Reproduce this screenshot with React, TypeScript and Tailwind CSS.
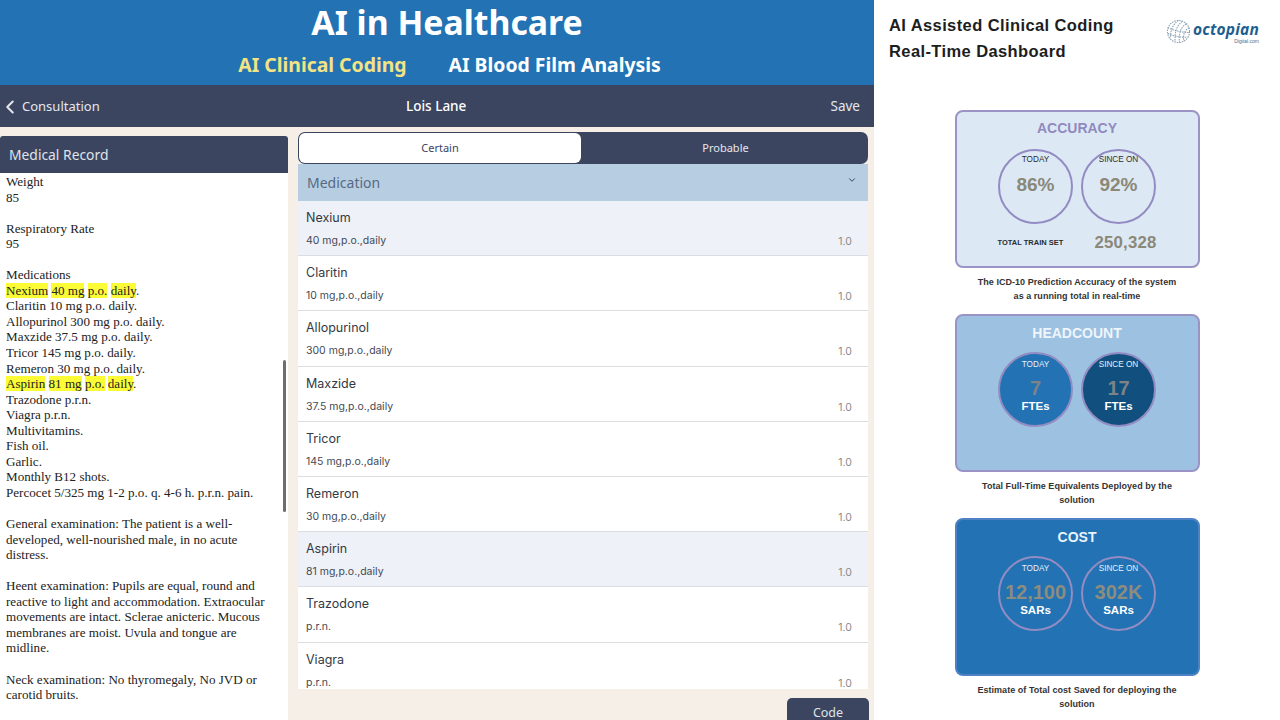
import { ChevronDown, ChevronLeft } from "lucide-react";

const meds = [
  { name: "Nexium", dose: "40 mg,p.o.,daily", marked: true },
  { name: "Claritin", dose: "10 mg,p.o.,daily" },
  { name: "Allopurinol", dose: "300 mg,p.o.,daily" },
  { name: "Maxzide", dose: "37.5 mg,p.o.,daily" },
  { name: "Tricor", dose: "145 mg,p.o.,daily" },
  { name: "Remeron", dose: "30 mg,p.o.,daily" },
  { name: "Aspirin", dose: "81 mg,p.o.,daily", marked: true },
  { name: "Trazodone", dose: "p.r.n." },
  { name: "Viagra", dose: "p.r.n." },
];

const Mark = ({ children }: { children: string }) => (
  <span className="bg-[#fbfb36]">{children}</span>
);

const MarkedMed = ({ name, dose }: { name: string; dose: string }) => (
  <p>
    <Mark>{name}</Mark> <Mark>{dose}</Mark> <Mark>p.o.</Mark> <Mark>daily</Mark>.
  </p>
);

const MedicalRecord = () => (
  <div className="relative flex h-[584px] w-[288px] shrink-0 flex-col overflow-hidden rounded-t-[3px] bg-white">
    <div className="flex h-[37px] shrink-0 items-center bg-[#3c4560] px-[9px] pt-[1px] font-['Noto_Sans',sans-serif] text-[13.85px] text-[#dfe3ea]">
      Medical Record
    </div>
    <div className="px-[6px] pt-[1px] font-['Liberation_Serif',serif] text-[13.08px] leading-[15.55px] text-[#222]">
      <p>Weight</p>
      <p>85</p>
      <p className="mt-[15.55px]">Respiratory Rate</p>
      <p>95</p>
      <p className="mt-[15.55px]">Medications</p>
      <MarkedMed name="Nexium" dose="40 mg" />
      <p>Claritin 10 mg p.o. daily.</p>
      <p>Allopurinol 300 mg p.o. daily.</p>
      <p>Maxzide 37.5 mg p.o. daily.</p>
      <p>Tricor 145 mg p.o. daily.</p>
      <p>Remeron 30 mg p.o. daily.</p>
      <MarkedMed name="Aspirin" dose="81 mg" />
      <p>Trazodone p.r.n.</p>
      <p>Viagra p.r.n.</p>
      <p>Multivitamins.</p>
      <p>Fish oil.</p>
      <p>Garlic.</p>
      <p>Monthly B12 shots.</p>
      <p>Percocet 5/325 mg 1-2 p.o. q. 4-6 h. p.r.n. pain.</p>
      <p className="mt-[15.55px]">
        General examination: The patient is a well-
        <br />
        developed, well-nourished male, in no acute
        <br />
        distress.
      </p>
      <p className="mt-[15.55px]">
        Heent examination: Pupils are equal, round and
        <br />
        reactive to light and accommodation. Extraocular
        <br />
        movements are intact. Sclerae anicteric. Mucous
        <br />
        membranes are moist. Uvula and tongue are
        <br />
        midline.
      </p>
      <p className="mt-[15.55px]">
        Neck examination: No thyromegaly, No JVD or
        <br />
        carotid bruits.
      </p>
    </div>
    <div className="absolute right-[2px] top-[224px] h-[152px] w-[3px] rounded-full bg-[#6e6e6e]" />
  </div>
);

const Coding = () => (
  <div className="flex min-w-0 flex-1 flex-col">
    <div className="flex h-[32px] shrink-0 rounded-[7px] bg-[#3c4560] p-[1px] font-['Noto_Sans',sans-serif] text-[11px] text-[#e4e7ee]">
      <div className="flex w-[282px] items-center justify-center rounded-[6px] bg-white text-[#3c4560]">
        Certain
      </div>
      <div className="flex flex-1 items-center justify-center pl-[3px]">Probable</div>
    </div>
    <div className="flex h-[37px] shrink-0 items-center justify-between bg-[#b7cee2] pl-[9px] pr-[11px] font-['Noto_Sans',sans-serif] text-[14px] text-[#566a84]">
      Medication
      <ChevronDown className="mb-[6px] size-[10px] text-[#3c4560]" strokeWidth={2.4} />
    </div>
    <div className="h-[488px] shrink-0 overflow-hidden bg-white">
      {meds.map((m) => (
        <div
          key={m.name}
          className={`flex h-[55.2px] flex-col border-b border-[#dcdde0] pl-[8px] pr-[16px] pt-[9px] font-['Inter',sans-serif] ${m.marked ? "bg-[#eef1f7]" : "bg-white"}`}
        >
          <span className="text-[12.5px] leading-[16px] text-[#333a45]">{m.name}</span>
          <div className="mt-[7px] flex items-end justify-between">
            <span className="text-[10.5px] leading-[16px] text-[#444a55]">{m.dose}</span>
            <span className="text-[10.5px] leading-[14px] text-[#8a8a8a]">1.0</span>
          </div>
        </div>
      ))}
    </div>
    <div className="-mr-[1px] flex justify-end pt-[9px]">
      <div className="flex h-[30px] w-[82px] justify-center rounded-t-[5px] bg-[#3c4560] pt-[6px] font-['Noto_Sans',sans-serif] text-[12.5px] text-[#dfe3ea]">
        Code
      </div>
    </div>
  </div>
);

const Logo = () => (
  <div className="flex items-start">
    <svg width="25" height="25" viewBox="0 0 26 26" fill="none" stroke="#8aa0b4" strokeDasharray="1.6 1" strokeWidth="1.1">
      <circle cx="13" cy="13" r="11.5" />
      <path d="M13 1.5C7 6 5 10 4.5 20" />
      <path d="M17 2.5C11 7 9 13 9.5 23.5" />
      <path d="M21 5C15 9 13 15 14 24.5" />
      <path d="M24 9C19 12 17.5 17 18.5 23" />
      <path d="M2 9C8 12 16 14 24.5 14" />
      <path d="M2 15C8 18 14 19 22 19" />
    </svg>
    <div className="ml-[2px] flex flex-col items-end pt-[3px]">
      <span className="font-['Noto_Sans',sans-serif] text-[15.5px] font-bold italic leading-[15px] tracking-[0.2px] text-[#1f5f8f]">
        octopian
      </span>
      <span className="mt-[2px] font-['Liberation_Sans',sans-serif] text-[5px] leading-[5px] text-[#4a6f8f]">
        Digital.com
      </span>
    </div>
  </div>
);

type CircleProps = {
  label: string;
  value: string;
  unit?: string;
  className: string;
  labelClass: string;
  valueClass: string;
};

const Circle = ({ label, value, unit, className, labelClass, valueClass }: CircleProps) => (
  <div className={`flex size-[75px] flex-col items-center rounded-full border-2 border-[#938cc2] ${className}`}>
    <span className={`text-[8.2px] leading-[12px] ${labelClass}`}>{label}</span>
    <span className={`font-bold ${valueClass}`}>{value}</span>
    {unit && <span className="text-[11.5px] font-bold leading-[14px] text-white">{unit}</span>}
  </div>
);

const cardBase = "flex h-[158px] w-[245px] flex-col items-center rounded-[8px] border-2";

const Caption = ({ lines }: { lines: string[] }) => (
  <div className="mt-[7px] h-[39px] text-center text-[9px] font-bold leading-[14px] tracking-[0.04px] text-[#333]">
    {lines.map((l) => (
      <p key={l}>{l}</p>
    ))}
  </div>
);

const Dashboard = () => (
  <div className="flex min-w-0 flex-1 flex-col bg-white font-['Liberation_Sans',sans-serif]">
    <div className="flex h-[110px] shrink-0 items-start justify-between pl-[15px] pr-[21px] pt-[12px]">
      <div className="text-[16.5px] font-bold leading-[26px] tracking-[0.4px] text-[#1d1d1d]">
        <p>AI Assisted Clinical Coding</p>
        <p>Real-Time Dashboard</p>
      </div>
      <div className="pt-[7px]">
        <Logo />
      </div>
    </div>
    <div className="flex flex-col items-center">
      <div className={`${cardBase} border-[#9a94c6] bg-[#dce9f5] pt-[6px]`}>
        <h3 className="text-[14px] font-bold leading-[20px] text-[#9189bf]">ACCURACY</h3>
        <div className="mt-[11px] flex gap-[8px]">
          <Circle label="TODAY" value="86%" className="bg-[#dce9f5] pt-[3px]" labelClass="text-[#2c2c2c]" valueClass="mt-[7px] text-[19px] leading-[24px] text-[#8b8878]" />
          <Circle label="SINCE ON" value="92%" className="bg-[#dce9f5] pt-[3px]" labelClass="text-[#2c2c2c]" valueClass="mt-[7px] text-[19px] leading-[24px] text-[#8b8878]" />
        </div>
        <div className="mt-[6px] flex w-[159px] items-center justify-between">
          <span className="text-[7.5px] font-bold text-[#2c2c2c]">TOTAL TRAIN SET</span>
          <span className="text-[16.8px] font-bold tracking-[0.2px] text-[#8b8878]">250,328</span>
        </div>
      </div>
      <Caption lines={["The ICD-10 Prediction Accuracy of the system", "as a running total in real-time"]} />
      <div className={`${cardBase} border-[#9a94c6] bg-[#9dc1e1] pt-[7px]`}>
        <h3 className="text-[14px] font-bold leading-[20px] text-[#eef5fb]">HEADCOUNT</h3>
        <div className="mt-[9px] flex gap-[8px]">
          <Circle label="TODAY" value="7" unit="FTEs" className="bg-[#2272b4] pt-[5px]" labelClass="text-[#e6f0f8]" valueClass="mt-[6px] text-[20px] leading-[22px] text-[#7d8387]" />
          <Circle label="SINCE ON" value="17" unit="FTEs" className="bg-[#11507e] pt-[5px]" labelClass="text-[#e6f0f8]" valueClass="mt-[6px] text-[20px] leading-[22px] text-[#7d8387]" />
        </div>
      </div>
      <Caption lines={["Total Full-Time Equivalents Deployed by the", "solution"]} />
      <div className={`${cardBase} border-[#4f82c4] bg-[#2272b4] pt-[7px]`}>
        <h3 className="text-[14px] font-bold leading-[20px] text-[#e8f3fb]">COST</h3>
        <div className="mt-[9px] flex gap-[8px]">
          <Circle label="TODAY" value="12,100" unit="SARs" className="bg-[#2272b4] pt-[5px]" labelClass="text-[#e6f0f8]" valueClass="mt-[6px] text-[20px] leading-[22px] text-[#8c8c7f]" />
          <Circle label="SINCE ON" value="302K" unit="SARs" className="bg-[#2272b4] pt-[5px]" labelClass="text-[#e6f0f8]" valueClass="mt-[6px] text-[20px] leading-[22px] text-[#8c8c7f]" />
        </div>
      </div>
      <Caption lines={["Estimate of Total cost Saved for deploying the", "solution"]} />
    </div>
  </div>
);

export default function App() {
  return (
    <div className="flex h-[720px] w-[1280px] overflow-hidden">
      <div className="flex w-[874px] shrink-0 flex-col bg-[#f6efe7]">
        <header className="h-[85px] shrink-0 bg-[#2272b4] text-center font-['Noto_Sans',sans-serif] font-bold text-white">
          <h1 className="pl-[20px] text-[33.8px] leading-[44px]">AI in Healthcare</h1>
          <div className="mt-[5px] flex justify-center gap-[42px] pl-[25px] text-[19.4px] leading-[32px]">
            <span className="text-[#f3e384]">AI Clinical Coding</span>
            <span>AI Blood Film Analysis</span>
          </div>
        </header>
        <nav className="relative flex h-[42px] shrink-0 items-center justify-between bg-[#3c4560] pr-[14px] pt-[1px] font-['Noto_Sans',sans-serif] text-[13px] text-[#e4e7ee]">
          <div className="flex items-center">
            <ChevronLeft className="-ml-[1px] size-[22px]" strokeWidth={2.2} />
            <span className="ml-[1px]">Consultation</span>
          </div>
          <span className="absolute left-[406px] text-[13.5px] font-medium text-white">Lois Lane</span>
          <span className="text-[13.5px]">Save</span>
        </nav>
        <div className="flex flex-1 gap-[10px] pr-[6px] pt-[5px]">
          <div className="pt-[4px]">
            <MedicalRecord />
          </div>
          <Coding />
        </div>
      </div>
      <Dashboard />
    </div>
  );
}
